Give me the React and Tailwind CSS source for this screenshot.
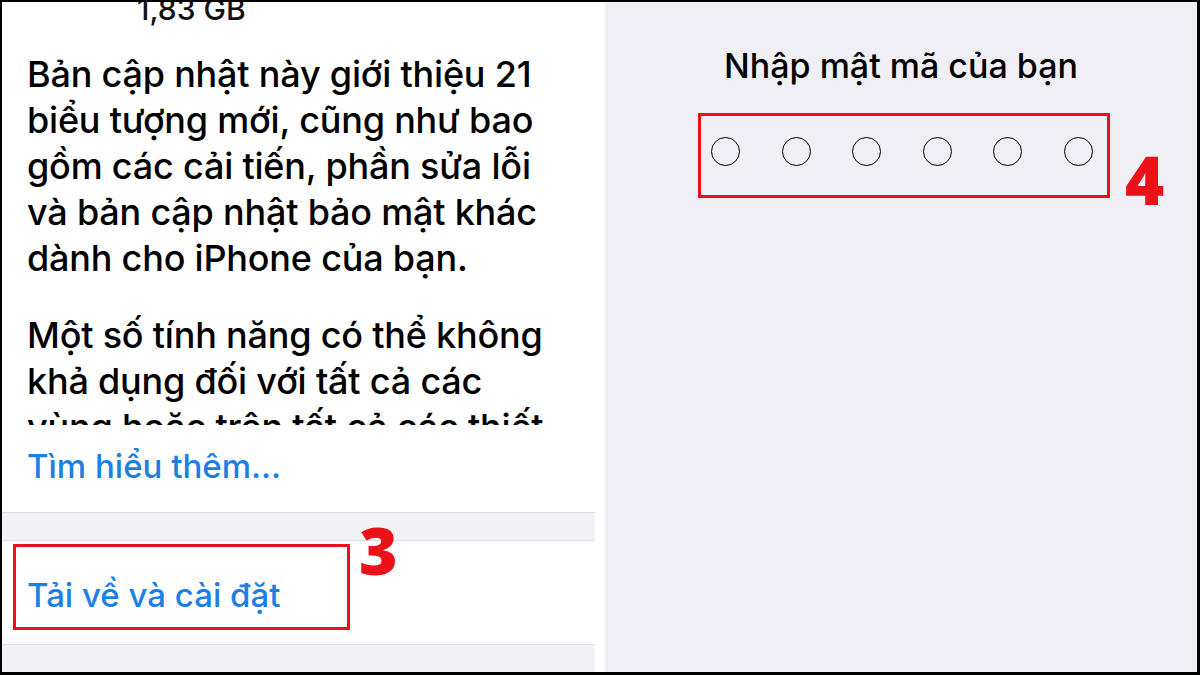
const font = { fontFamily: "Inter, 'Noto Sans', sans-serif" };
const digitFont = { fontFamily: "'Open Sans', 'Liberation Sans', sans-serif" };

const noteLines = [
  "Bản cập nhật này giới thiệu 21",
  "biểu tượng mới, cũng như bao",
  "gồm các cải tiến, phần sửa lỗi",
  "và bản cập nhật bảo mật khác",
  "dành cho iPhone của bạn.",
];

const moreLines = [
  "Một số tính năng có thể không",
  "khả dụng đối với tất cả các",
  "vùng hoặc trên tất cả các thiết",
];

function Circle() {
  return <div className="w-[29px] h-[29px] rounded-full border-[1.5px] border-black" />;
}

export default function App() {
  return (
    <div
      className="w-[1200px] h-[675px] bg-black pt-[2px] pl-[2px] pr-[3px] pb-[3px] flex overflow-hidden"
      style={font}
    >
      {/* left: software update screen */}
      <div className="w-[603px] h-full bg-white pr-[10px] flex flex-col">
        <div className="h-[423px] overflow-hidden text-black">
          <div className="pl-[135px] -mt-[10px] text-[30px] leading-[34px] font-medium text-[#111]">1,83 GB</div>
          <div className="pl-[25px] mt-[25px] text-[36px] leading-[46px] font-medium tracking-[-0.2px]">
            {noteLines.map((l) => (
              <div key={l} className="whitespace-nowrap">{l}</div>
            ))}
          </div>
          <div className="pl-[25px] mt-[31px] text-[36px] leading-[46px] font-medium tracking-[-0.2px]">
            {moreLines.map((l) => (
              <div key={l} className="whitespace-nowrap">{l}</div>
            ))}
          </div>
        </div>
        <div className="h-[87px] pl-[25px] pt-[21px] text-[33px] leading-[40px] font-medium text-[#1b7fe4]">
          Tìm hiểu thêm...
        </div>
        <div className="h-[29px] bg-[#f2f2f7] border-t border-b border-[#dedee3]" />
        <div className="relative h-[103px] pl-[25px] pt-[34px] text-[33px] leading-[40px] font-medium text-[#1b7fe4]">
          Tải về và cài đặt
          <div className="absolute left-[11px] top-[3px] w-[337px] h-[86px] border-[3px] border-[#ec1118]" />
          <div
            className="absolute left-[357px] -top-[37px] text-[66px] leading-[90px] font-extrabold text-[#ec1118]"
            style={digitFont}
          >
            3
          </div>
        </div>
        <div className="flex-1 bg-[#f2f2f7] border-t border-[#dedee3]" />
      </div>

      {/* right: passcode screen */}
      <div className="flex-1 h-full bg-[#f0eff5] flex flex-col">
        <div className="pt-[42px] text-center text-[34px] leading-[44px] font-medium text-black">Nhập mật mã của bạn</div>
        <div className="relative ml-[93px] mt-[25px] w-[412px] h-[85px] border-[3px] border-[#ec1118] flex justify-between pl-[10px] pr-[14px] pt-[21px]">
          {[0, 1, 2, 3, 4, 5].map((i) => (
            <Circle key={i} />
          ))}
          <div
            className="absolute left-[424px] top-[18px] text-[67px] leading-[90px] font-extrabold text-[#ec1118]"
            style={digitFont}
          >
            4
          </div>
        </div>
      </div>
    </div>
  );
}
